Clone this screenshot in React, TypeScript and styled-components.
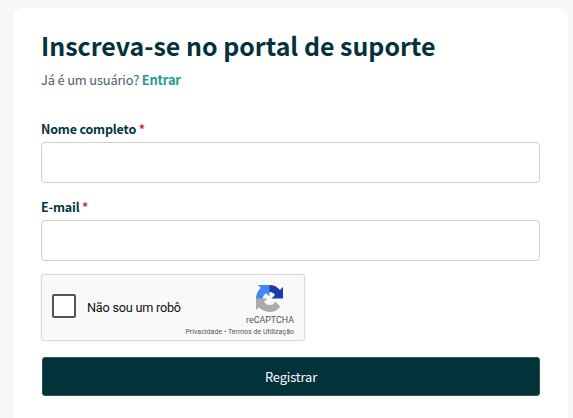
import React from "react";
import styled, { createGlobalStyle } from "styled-components";

const GlobalStyle = createGlobalStyle`
  *, *::before, *::after { box-sizing: border-box; }
  html, body { margin: 0; background: #f5f7f9; overflow: hidden; }
  body { font-family: "Noto Sans CJK SC", "Noto Sans", sans-serif; color: #03363d; }
`;

const Page = styled.main`
  height: 418px;
  padding: 8px 5px 0 13px;
  overflow: hidden;
`;

const Card = styled.section`
  display: flex;
  flex-direction: column;
  height: 440px;
  padding: 19px 28px 0;
  border-radius: 10px;
  background: #fff;
`;

const Title = styled.h1`
  margin: 0;
  font-size: 24.95px;
  line-height: 36px;
  font-weight: 700;
  color: #03323a;
  white-space: nowrap;
`;

const Subtitle = styled.p`
  margin: 7px 0 0;
  font-size: 12.9px;
  line-height: 20px;
  letter-spacing: -0.18px;
  color: #49606f;
`;

const SignInLink = styled.a`
  color: #259b95;
  font-weight: 700;
  text-decoration: none;
`;

const Form = styled.form`
  display: flex;
  flex-direction: column;
  margin-top: 29px;
`;

const Field = styled.label`
  display: flex;
  flex-direction: column;
  height: 78px;
`;

const FieldLabel = styled.span`
  font-size: 12.5px;
  line-height: 20px;
  letter-spacing: -0.18px;
  font-weight: 600;
  color: #03363d;
`;

const Required = styled.span`
  color: #cc3340;
`;

const TextInput = styled.input`
  width: 499px;
  height: 41px;
  margin-top: 3px;
  padding: 0 12px;
  border: 1px solid #c9d0d6;
  border-radius: 4px;
  background: #fff;
  font: inherit;
`;

const Captcha = styled.div`
  display: flex;
  justify-content: space-between;
  width: 264px;
  height: 67px;
  margin-top: -1px;
  padding: 0 10px 0 10px;
  border: 1px solid #d9d9d9;
  border-radius: 3px;
  background: #f9f9f9;
  box-shadow: 0 0 2px rgba(0, 0, 0, 0.08);
  font-family: Roboto, sans-serif;
`;

const CaptchaCheck = styled.div`
  display: flex;
  align-items: center;
  height: 62px;
  gap: 11px;
  font-size: 12.7px;
  letter-spacing: -0.23px;
  color: #111;
  white-space: nowrap;

  & > span:last-child {
    padding-top: 3px;
  }
`;

const CheckBox = styled.span`
  width: 24px;
  height: 24px;
  border: 2px solid #555;
  border-radius: 2px;
  background: #fff;
`;

const CaptchaBrand = styled.div`
  display: flex;
  flex-direction: column;
  align-items: flex-end;
  padding-top: 10px;
  color: #555;
  white-space: nowrap;
`;

const Logo = styled.svg`
  width: 27px;
  height: 27px;
  margin-right: 11px;
`;

const BrandName = styled.span`
  margin-top: 3px;
  font-size: 8.9px;
  line-height: 10px;
`;

const Legal = styled.span`
  margin-top: 2px;
  font-size: 7px;
  line-height: 10px;
  letter-spacing: 0.03px;
`;

const Submit = styled.button`
  width: 498px;
  height: 39px;
  margin: 16px 0 0 1px;
  border: 1px solid #2a555b;
  border-radius: 3px;
  background: #02333a;
  color: #fff;
  font-family: inherit;
  font-size: 12.8px;
  line-height: 20px;
  letter-spacing: -0.1px;
  padding: 1px 0 0;
`;

const RecaptchaLogo = () => (
  <Logo viewBox="0 0 64 64" aria-hidden="true">
    <path
      fill="#1c3aa9"
      d="M64 31.955l-.033-1.37V4.687l-7.16 7.16C50.948 4.674 42.033.093 32.05.093c-10.4 0-19.622 4.96-25.458 12.64l11.736 11.86a15.55 15.55 0 0 1 4.754-5.334c2.05-1.6 4.952-2.906 8.968-2.906.485 0 .86.057 1.135.163 4.976.393 9.288 3.14 11.828 7.124l-8.307 8.307L64 31.953"
    />
    <path
      fill="#4285f4"
      d="M31.862.094l-1.37.033H4.594l7.16 7.16C4.58 13.147 0 22.06 0 32.046c0 10.4 4.96 19.622 12.64 25.458L24.5 45.768a15.55 15.55 0 0 1-5.334-4.754c-1.6-2.05-2.906-4.952-2.906-8.968 0-.485.057-.86.163-1.135.393-4.976 3.14-9.288 7.124-11.828l8.307 8.307L31.86.095"
    />
    <path
      fill="#ababab"
      d="M.001 32.045l.033 1.37v25.898l7.16-7.16c5.86 7.173 14.774 11.754 24.76 11.754 10.4 0 19.622-4.96 25.458-12.64l-11.736-11.86a15.55 15.55 0 0 1-4.754 5.334c-2.05 1.6-4.952 2.906-8.968 2.906-.485 0-.86-.057-1.135-.163-4.976-.393-9.288-3.14-11.828-7.124l8.307-8.307c-10.522.04-22.4.066-27.295-.005"
    />
  </Logo>
);

const fields = [
  { name: "name", label: "Nome completo", type: "text" },
  { name: "email", label: "E-mail", type: "email" },
];

export default function App() {
  return (
    <>
      <GlobalStyle />
      <Page>
        <Card>
          <Title>Inscreva-se no portal de suporte</Title>
          <Subtitle>
            Já é um usuário? <SignInLink>Entrar</SignInLink>
          </Subtitle>
          <Form>
            {fields.map((f) => (
              <Field key={f.name}>
                <FieldLabel>
                  {f.label} <Required>*</Required>
                </FieldLabel>
                <TextInput name={f.name} type={f.type} />
              </Field>
            ))}
            <Captcha>
              <CaptchaCheck>
                <CheckBox role="checkbox" aria-checked={false} />
                <span>Não sou um robô</span>
              </CaptchaCheck>
              <CaptchaBrand>
                <RecaptchaLogo />
                <BrandName>reCAPTCHA</BrandName>
                <Legal>Privacidade • Termos de Utilização</Legal>
              </CaptchaBrand>
            </Captcha>
            <Submit type="button">Registrar</Submit>
          </Form>
        </Card>
      </Page>
    </>
  );
}
